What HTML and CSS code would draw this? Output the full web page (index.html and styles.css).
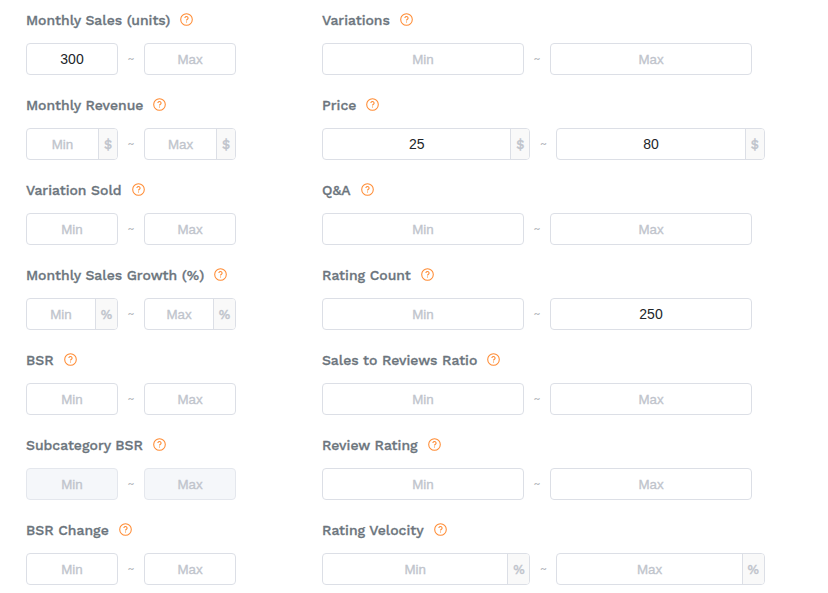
FILE: index.html
```html
<!DOCTYPE html>
<html lang="en">
	<head>
		<meta charset="UTF-8" />
		<meta name="viewport" content="width=device-width, initial-scale=1.0" />
		<title>Product Filters</title>
		<link rel="stylesheet" href="styles.css">
	</head>
	<body>
		<!-- Help icon, reused by every label -->
		<svg class="sprite" width="0" height="0">
			<symbol id="help" viewBox="0 0 13 13">
				<circle cx="6.5" cy="6.5" r="5.8" />
				<path d="M4.9 5.1a1.6 1.5 0 1 1 2.5 1.2c-.6.4-.9.6-.9 1.2M6.5 8.6v1" />
			</symbol>
		</svg>
		
		<form class="filters">
			<!-- Left column [start] -->
			<div class="filter-col">
				<div class="filter">
					<div class="filter-label"><span>Monthly Sales (units)</span><svg class="help"><use href="#help" /></svg></div>
					<div class="range">
						<div class="field"><input type="text" value="300" placeholder="Min" /></div>
						<span class="tilde">~</span>
						<div class="field"><input type="text" placeholder="Max" /></div>
					</div>
				</div>
				<div class="filter">
					<div class="filter-label"><span>Monthly Revenue</span><svg class="help"><use href="#help" /></svg></div>
					<div class="range">
						<div class="field"><input type="text" placeholder="Min" /><span class="unit">$</span></div>
						<span class="tilde">~</span>
						<div class="field"><input type="text" placeholder="Max" /><span class="unit">$</span></div>
					</div>
				</div>
				<div class="filter">
					<div class="filter-label"><span>Variation Sold</span><svg class="help"><use href="#help" /></svg></div>
					<div class="range">
						<div class="field"><input type="text" placeholder="Min" /></div>
						<span class="tilde">~</span>
						<div class="field"><input type="text" placeholder="Max" /></div>
					</div>
				</div>
				<div class="filter">
					<div class="filter-label"><span>Monthly Sales Growth (%)</span><svg class="help"><use href="#help" /></svg></div>
					<div class="range">
						<div class="field"><input type="text" placeholder="Min" /><span class="unit percent">%</span></div>
						<span class="tilde">~</span>
						<div class="field"><input type="text" placeholder="Max" /><span class="unit percent">%</span></div>
					</div>
				</div>
				<div class="filter">
					<div class="filter-label"><span>BSR</span><svg class="help"><use href="#help" /></svg></div>
					<div class="range">
						<div class="field"><input type="text" placeholder="Min" /></div>
						<span class="tilde">~</span>
						<div class="field"><input type="text" placeholder="Max" /></div>
					</div>
				</div>
				<div class="filter">
					<div class="filter-label"><span>Subcategory BSR</span><svg class="help"><use href="#help" /></svg></div>
					<div class="range">
						<div class="field disabled"><input type="text" placeholder="Min" disabled /></div>
						<span class="tilde">~</span>
						<div class="field disabled"><input type="text" placeholder="Max" disabled /></div>
					</div>
				</div>
				<div class="filter">
					<div class="filter-label"><span>BSR Change</span><svg class="help"><use href="#help" /></svg></div>
					<div class="range">
						<div class="field"><input type="text" placeholder="Min" /></div>
						<span class="tilde">~</span>
						<div class="field"><input type="text" placeholder="Max" /></div>
					</div>
				</div>
			</div>
			<!-- Left column [end  ] -->
			
			<!-- Right column [start] -->
			<div class="filter-col wide">
				<div class="filter">
					<div class="filter-label"><span>Variations</span><svg class="help"><use href="#help" /></svg></div>
					<div class="range">
						<div class="field"><input type="text" placeholder="Min" /></div>
						<span class="tilde">~</span>
						<div class="field"><input type="text" placeholder="Max" /></div>
					</div>
				</div>
				<div class="filter">
					<div class="filter-label"><span>Price</span><svg class="help"><use href="#help" /></svg></div>
					<div class="range with-unit">
						<div class="field"><input type="text" value="25" placeholder="Min" /><span class="unit">$</span></div>
						<span class="tilde">~</span>
						<div class="field"><input type="text" value="80" placeholder="Max" /><span class="unit">$</span></div>
					</div>
				</div>
				<div class="filter">
					<div class="filter-label"><span>Q&amp;A</span><svg class="help"><use href="#help" /></svg></div>
					<div class="range">
						<div class="field"><input type="text" placeholder="Min" /></div>
						<span class="tilde">~</span>
						<div class="field"><input type="text" placeholder="Max" /></div>
					</div>
				</div>
				<div class="filter">
					<div class="filter-label"><span>Rating Count</span><svg class="help"><use href="#help" /></svg></div>
					<div class="range">
						<div class="field"><input type="text" placeholder="Min" /></div>
						<span class="tilde">~</span>
						<div class="field"><input type="text" value="250" placeholder="Max" /></div>
					</div>
				</div>
				<div class="filter">
					<div class="filter-label"><span>Sales to Reviews Ratio</span><svg class="help"><use href="#help" /></svg></div>
					<div class="range">
						<div class="field"><input type="text" placeholder="Min" /></div>
						<span class="tilde">~</span>
						<div class="field"><input type="text" placeholder="Max" /></div>
					</div>
				</div>
				<div class="filter">
					<div class="filter-label"><span>Review Rating</span><svg class="help"><use href="#help" /></svg></div>
					<div class="range">
						<div class="field"><input type="text" placeholder="Min" /></div>
						<span class="tilde">~</span>
						<div class="field"><input type="text" placeholder="Max" /></div>
					</div>
				</div>
				<div class="filter">
					<div class="filter-label"><span>Rating Velocity</span><svg class="help"><use href="#help" /></svg></div>
					<div class="range with-unit">
						<div class="field"><input type="text" placeholder="Min" /><span class="unit percent">%</span></div>
						<span class="tilde">~</span>
						<div class="field"><input type="text" placeholder="Max" /><span class="unit percent">%</span></div>
					</div>
				</div>
			</div>
			<!-- Right column [end  ] -->
		</form>
	</body>
</html>
```

FILE: styles.css
```css
/* Base styles */
body {
	margin: 0;
	background: #fff;
	color: #6c757d;
	font-family: "Work Sans", Inter, sans-serif;
	font-size: 14px;
	overflow: hidden;
}
.sprite {
	display: block;
}
/* Two columns of filters */
.filters {
	display: grid;
	grid-template-columns: 210px 443px;
	column-gap: 86px;
	padding: 10px 26px 0;
}
.filter {
	margin-bottom: 20px;
}
/* Label and help icon */
.filter-label {
	display: flex;
	align-items: center;
	gap: 10px;
	height: 20px;
	margin-bottom: 13px;
	line-height: 20px;
	font-weight: 500;
	white-space: nowrap;
	-webkit-text-stroke: 0.3px #6c757d;
}
.help {
	width: 13px;
	height: 13px;
	margin-bottom: 1px;
	fill: none;
	stroke: #ff8b33;
	stroke-width: 1.05;
}
/* Min ~ Max range */
.range {
	display: flex;
	align-items: center;
}
.field {
	display: flex;
	box-sizing: border-box;
	width: 92px;
	height: 32px;
	border: 1px solid #dcdfe6;
	border-radius: 4px;
	overflow: hidden;
}
.wide .field {
	width: 202px;
}
.wide .with-unit .field {
	width: 208.4px;
}
.field input {
	flex: 1;
	min-width: 0;
	padding: 0;
	border: none;
	outline: none;
	background: transparent;
	color: #212529;
	font-family: "Liberation Sans", Arial, sans-serif;
	font-size: 14px;
	text-align: center;
}
.field input::placeholder {
	color: #c0c4cc;
	font-size: 13.33px;
	opacity: 1;
	-webkit-text-stroke: 0.3px #c0c4cc;
}
.field.disabled {
	background: #f5f7fa;
	border-color: #e4e7ed;
}
.tilde {
	width: 26px;
	color: #b4b7bd;
	font-size: 12px;
	text-align: center;
}
/* Unit shown at the end of a field */
.unit {
	box-sizing: border-box;
	width: 19px;
	border-left: 1px solid #dcdfe6;
	background: #f9f9f9;
	color: #c0c4cc;
	font-size: 13px;
	font-weight: 500;
	line-height: 31px;
	text-align: center;
	-webkit-text-stroke: 0.3px #c0c4cc;
}
.unit.percent {
	width: 22px;
}
```
